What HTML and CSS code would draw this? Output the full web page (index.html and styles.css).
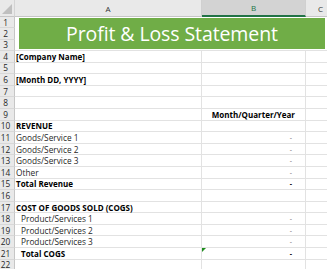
FILE: index.html
```html
<!DOCTYPE html>
<html>
<head>
<meta charset="utf-8">
<link rel="stylesheet" href="styles.css">
</head>
<body>
<div class="sheet">
  <div class="corner"><span class="tri"></span></div>
  <div class="colhead">A</div>
  <div class="colhead sel">B</div>
  <div class="colhead">C</div>

  <div class="rowhead short">1</div>
  <div class="banner"><div class="fill">Profit &amp; Loss Statement</div></div>
  <div class="rowhead short">2</div>
  <div class="rowhead short">3</div>

  <div class="rowhead">4</div><div class="cell bold">[Company Name]</div><div class="cell"></div><div class="cell"></div>
  <div class="rowhead">5</div><div class="cell"></div><div class="cell"></div><div class="cell"></div>
  <div class="rowhead">6</div><div class="cell bold">[Month DD, YYYY]</div><div class="cell"></div><div class="cell"></div>
  <div class="rowhead">7</div><div class="cell"></div><div class="cell"></div><div class="cell"></div>
  <div class="rowhead">8</div><div class="cell"></div><div class="cell"></div><div class="cell"></div>
  <div class="rowhead">9</div><div class="cell"></div><div class="cell bold right period">Month/Quarter/Year</div><div class="cell"></div>
  <div class="rowhead">10</div><div class="cell bold">REVENUE</div><div class="cell"></div><div class="cell"></div>
  <div class="rowhead">11</div><div class="cell item">Goods/Service 1</div><div class="cell num">-</div><div class="cell"></div>
  <div class="rowhead">12</div><div class="cell item">Goods/Service 2</div><div class="cell num">-</div><div class="cell"></div>
  <div class="rowhead">13</div><div class="cell item">Goods/Service 3</div><div class="cell num">-</div><div class="cell"></div>
  <div class="rowhead">14</div><div class="cell item">Other</div><div class="cell num">-</div><div class="cell"></div>
  <div class="rowhead">15</div><div class="cell bold">Total Revenue</div><div class="cell num total">-</div><div class="cell"></div>
  <div class="rowhead">16</div><div class="cell"></div><div class="cell"></div><div class="cell"></div>
  <div class="rowhead">17</div><div class="cell bold">COST OF GOODS SOLD (COGS)</div><div class="cell"></div><div class="cell"></div>
  <div class="rowhead">18</div><div class="cell item indent">Product/Services 1</div><div class="cell num">-</div><div class="cell"></div>
  <div class="rowhead">19</div><div class="cell item indent">Product/Services 2</div><div class="cell num">-</div><div class="cell"></div>
  <div class="rowhead">20</div><div class="cell item indent">Product/Services 3</div><div class="cell num">-</div><div class="cell"></div>
  <div class="rowhead">21</div><div class="cell bold indent">Total COGS</div><div class="cell num total flag">-</div><div class="cell"></div>
  <div class="rowhead">22</div><div class="cell"></div><div class="cell"></div><div class="cell"></div>
</div>
</body>
</html>
```

FILE: styles.css
```css
html, body {
  margin: 0;
  padding: 0;
  background: #ffffff;
}

body {
  width: 327px;
  height: 269px;
  overflow: hidden;
  font-family: "Open Sans", "Liberation Sans", sans-serif;
  font-size: 8px;
  color: #000;
}

.sheet {
  display: grid;
  grid-template-columns: 15px 187px 104px 30px;
  grid-template-rows: 17px repeat(3, 11.34px);
  grid-auto-rows: 11.6px;
  width: 336px;
}

.corner {
  position: relative;
  background: #e9e9e9;
  border-right: 1px solid #d4d4d4;
  border-bottom: 1px solid #c6c6c6;
  box-sizing: border-box;
}

.corner .tri {
  position: absolute;
  right: 2px;
  bottom: 2px;
  width: 0;
  height: 0;
  border-left: 10px solid transparent;
  border-bottom: 10px solid #bfbfbf;
}

.colhead {
  background: #e9e9e9;
  border-right: 1px solid #d0d0d0;
  border-bottom: 1px solid #c6c6c6;
  box-sizing: border-box;
  display: flex;
  align-items: center;
  justify-content: center;
  color: #333;
  font-size: 8px;
}

.colhead.sel {
  background: #d3d3d3;
  color: #217346;
  border-bottom: 2px solid #217346;
}

.rowhead {
  grid-column: 1;
  background: #e9e9e9;
  border-right: 1px solid #c6c6c6;
  border-bottom: 1px solid #d8d8d8;
  box-sizing: border-box;
  display: flex;
  align-items: center;
  justify-content: center;
  padding-right: 3px;
  color: #262626;
  font-size: 8.3px;
}

.banner {
  grid-column: 2 / 5;
  grid-row: 2 / 5;
  background: #ffffff;
  padding: 1px 4px 1px 4px;
  box-sizing: border-box;
  border-bottom: 1px solid #e2e2e2;
}

.banner .fill {
  height: 100%;
  width: 306px;
  background: #70ad47;
  color: #ffffff;
  display: flex;
  align-items: center;
  justify-content: center;
  font-size: 19.5px;
  letter-spacing: -0.1px;
}

.cell {
  position: relative;
  border-right: 1px solid #e2e2e2;
  border-bottom: 1px solid #e2e2e2;
  box-sizing: border-box;
  display: flex;
  align-items: center;
  padding-left: 1px;
  white-space: nowrap;
  overflow: visible;
}

.bold {
  font-weight: 700;
}

.item {
  color: #1f1f1f;
  font-size: 8.3px;
}

.indent {
  padding-left: 6px;
}

.right {
  justify-content: flex-end;
}

.period {
  padding-right: 10px;
}

.num {
  justify-content: flex-end;
  padding-right: 13px;
  color: #6f6f6f;
  font-size: 7px;
}

.num.total {
  color: #000;
  font-weight: 700;
}

.flag::before {
  content: "";
  position: absolute;
  left: 0;
  top: 0;
  width: 0;
  height: 0;
  border-top: 4px solid #1e8c1e;
  border-right: 4px solid transparent;
}
```
